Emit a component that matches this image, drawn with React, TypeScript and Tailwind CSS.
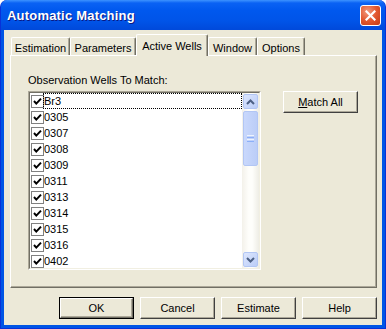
import React from "react";

const items = ["Br3", "0305", "0307", "0308", "0309", "0311", "0313", "0314", "0315", "0316", "0402"];

function Check() {
  return (
    <div className="w-[13px] h-[13px] shrink-0 border border-[#808080] bg-white flex items-center justify-center">
      <svg width="11" height="11" viewBox="0 0 11 11">
        <polyline points="2,5 4.3,7.6 9,2.6" fill="none" stroke="#000" strokeWidth="2" />
      </svg>
    </div>
  );
}

function Btn({ children, def = false }: { children: React.ReactNode; def?: boolean }) {
  if (def) {
    return (
      <div className="w-[75px] h-[22px] border border-black">
        <div className="w-full h-full border-t border-l border-white border-r border-b border-r-[#716F64] border-b-[#716F64] shadow-[inset_-1px_-1px_0_#ACA899] bg-[#ECE9D8] flex items-center justify-center text-[11px] text-black">
          {children}
        </div>
      </div>
    );
  }
  return (
    <div className="w-[75px] h-[22px] border-t border-l border-white border-r border-b border-r-[#404040] border-b-[#404040] shadow-[inset_-1px_-1px_0_#ACA899] bg-[#ECE9D8] flex items-center justify-center text-[11px] text-black">
      {children}
    </div>
  );
}

function Chevron({ up }: { up: boolean }) {
  return (
    <svg width="9" height="6" viewBox="0 0 9 6">
      <polyline
        points={up ? "1,5 4.5,1.5 8,5" : "1,1 4.5,4.5 8,1"}
        fill="none"
        stroke="#4D6185"
        strokeWidth="2"
      />
    </svg>
  );
}

function ScrollBtn({ up }: { up: boolean }) {
  return (
    <div className="w-[17px] h-[17px] p-px shrink-0">
      <div className="w-full h-full rounded-[2px] border border-[#B2C6F4] bg-[linear-gradient(135deg,#DCE6FE,#BBCDF7)] flex items-center justify-center">
        <Chevron up={up} />
      </div>
    </div>
  );
}

function Tab({ label, active = false, w }: { label: string; active?: boolean; w: string }) {
  if (active) {
    return (
      <div
        className={`${w} h-[22px] -mb-px relative z-10 bg-[#ECE9D8] border-t border-l border-white border-r border-r-[#716F64] rounded-t-[2px] shadow-[inset_-1px_0_0_#ACA899] flex justify-center pt-[3px] text-[11px] text-black`}
      >
        {label}
      </div>
    );
  }
  return (
    <div
      className={`${w} h-[18px] bg-[#ECE9D8] border-t border-l border-white border-r border-r-[#716F64] rounded-t-[2px] shadow-[inset_-1px_0_0_#ACA899] flex justify-center pt-[2px] text-[11px] text-black`}
    >
      {label}
    </div>
  );
}

export default function App() {
  return (
    <div className="w-[386px] h-[329px] bg-white font-['Liberation_Sans',Arial,sans-serif]">
      <div className="w-[386px] h-[329px] flex flex-col rounded-t-[7px] bg-[#0055E5] border border-[#0831D9] border-t-0 overflow-hidden">
        {/* Title bar */}
        <div className="h-[30px] shrink-0 -mx-px flex items-center justify-between pl-[7px] pr-[5px] bg-[linear-gradient(180deg,#3D93FF_0%,#0A62F4_10%,#0058EE_35%,#0054E8_70%,#0049DA_100%)] rounded-t-[7px]">
          <span className="text-white font-bold text-[13px] leading-none [text-shadow:1px_1px_0_#0A1883] tracking-[0.2px]">
            Automatic Matching
          </span>
          <div className="w-[21px] h-[21px] rounded-[3px] border border-white bg-[radial-gradient(circle_at_35%_30%,#F19A7E_0%,#E2582F_50%,#C23A14_100%)] flex items-center justify-center">
            <svg width="11" height="11" viewBox="0 0 11 11">
              <path d="M1.5 1.5 L9.5 9.5 M9.5 1.5 L1.5 9.5" stroke="#fff" strokeWidth="2.2" strokeLinecap="square" />
            </svg>
          </div>
        </div>

        {/* Body */}
        <div className="flex-1 mx-[3px] mb-[3px] bg-[#ECE9D8] flex flex-col pb-[6px]">
          {/* Tabs */}
          <div className="flex items-end pt-[4px] pl-[7px] h-[25px]">
            <Tab label="Estimation" w="w-[59px]" />
            <Tab label="Parameters" w="w-[66px]" />
            <Tab label="Active Wells" active w="w-[72px]" />
            <Tab label="Window" w="w-[49px]" />
            <Tab label="Options" w="w-[48px]" />
          </div>

          {/* Panel */}
          <div className="ml-[6px] mr-[5px] h-[233px] border-t border-l border-white border-r border-b border-r-[#716F64] border-b-[#716F64] shadow-[inset_-1px_-1px_0_#ACA899] flex items-start">
            <div className="flex flex-col pl-[17px] pt-[18px]">
              <div className="text-[11px] leading-[13px] text-black">Observation Wells To Match:</div>
              <div className="mt-[4px] w-[233px] h-[179px] border border-t-[#ACA899] border-l-[#ACA899] border-r-white border-b-white">
                <div className="w-full h-full border border-t-[#716F64] border-l-[#716F64] border-r-[#F1EFE2] border-b-[#F1EFE2] bg-white flex overflow-hidden">
                  <div className="flex-1 flex flex-col">
                    {items.map((it, i) => (
                      <div key={it} className="h-[16px] shrink-0 flex items-center pl-px">
                        <Check />
                        <div
                          className={
                            i === 0
                              ? "flex-1 h-[16px] flex items-center border border-dotted border-black text-[11px] text-black pl-0 -ml-px"
                              : "flex-1 h-[16px] flex items-center text-[11px] text-black"
                          }
                        >
                          {it}
                        </div>
                      </div>
                    ))}
                  </div>
                  {/* Scrollbar */}
                  <div className="w-[17px] h-full shrink-0 flex flex-col bg-[linear-gradient(90deg,#F3F1EA_0%,#FEFEFB_40%,#FEFEFB_60%,#EEEDE5_100%)]">
                    <ScrollBtn up />
                    <div className="w-[17px] h-[56px] px-px pt-[1px] shrink-0">
                      <div className="w-full h-full rounded-[2px] border border-[#B2C6F4] bg-[linear-gradient(90deg,#C9D8FC,#BBCDF7)] flex flex-col items-center justify-center gap-px">
                        <div className="w-[7px] h-px bg-[#EEF4FE]" />
                        <div className="w-[7px] h-px bg-[#8CB0F8]" />
                        <div className="w-[7px] h-px bg-[#EEF4FE]" />
                        <div className="w-[7px] h-px bg-[#8CB0F8]" />
                      </div>
                    </div>
                    <div className="flex-1" />
                    <ScrollBtn up={false} />
                  </div>
                </div>
              </div>
            </div>
            <div className="ml-[22px] mt-[35px]">
              <Btn>
                <span>
                  <span className="underline">M</span>atch All
                </span>
              </Btn>
            </div>
          </div>

          {/* Bottom buttons */}
          <div className="mt-[9px] mr-[5px] flex justify-end gap-[6px]">
            <Btn def>OK</Btn>
            <Btn>Cancel</Btn>
            <Btn>Estimate</Btn>
            <Btn>Help</Btn>
          </div>
        </div>
      </div>
    </div>
  );
}
